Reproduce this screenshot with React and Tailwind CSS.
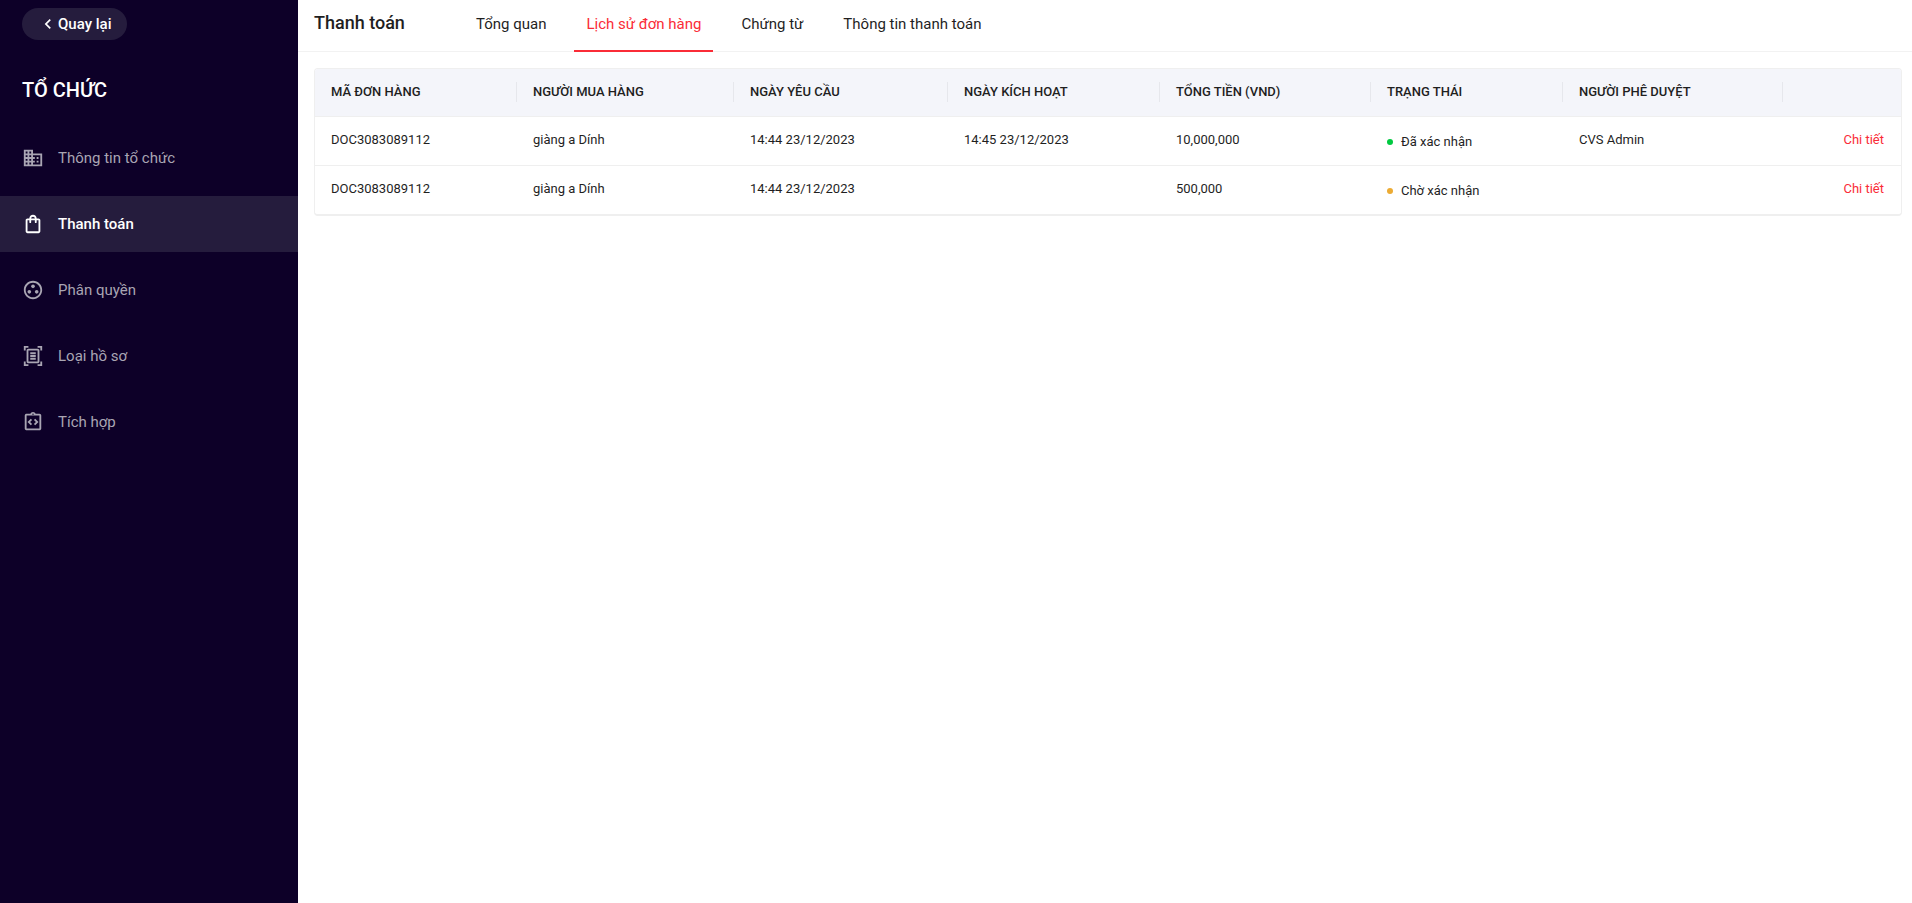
import {
  MdChevronLeft,
  MdDomain,
  MdOutlineShoppingBag,
  MdOutlineGroupWork,
  MdOutlineDocumentScanner,
  MdOutlineIntegrationInstructions,
} from "react-icons/md";
import clsx from "clsx";

const menu = [
  { label: "Thông tin tổ chức", Icon: MdDomain },
  { label: "Thanh toán", Icon: MdOutlineShoppingBag, active: true },
  { label: "Phân quyền", Icon: MdOutlineGroupWork },
  { label: "Loại hồ sơ", Icon: MdOutlineDocumentScanner },
  { label: "Tích hợp", Icon: MdOutlineIntegrationInstructions },
];

const tabs = [
  { label: "Tổng quan" },
  { label: "Lịch sử đơn hàng", active: true },
  { label: "Chứng từ" },
  { label: "Thông tin thanh toán" },
];

const columns = [
  { title: "MÃ ĐƠN HÀNG", width: "w-[202px]" },
  { title: "NGƯỜI MUA HÀNG", width: "w-[217px]" },
  { title: "NGÀY YÊU CẦU", width: "w-[214px]" },
  { title: "NGÀY KÍCH HOẠT", width: "w-[212px]" },
  { title: "TỔNG TIỀN (VND)", width: "w-[211px]" },
  { title: "TRẠNG THÁI", width: "w-[192px]" },
  { title: "NGƯỜI PHÊ DUYỆT", width: "w-[220px]" },
  { title: "", width: "w-[118px]" },
];

const orders = [
  {
    code: "DOC3083089112",
    buyer: "giàng a Dính",
    requested: "14:44 23/12/2023",
    activated: "14:45 23/12/2023",
    total: "10,000,000",
    status: "Đã xác nhận",
    dot: "bg-[#00c940]",
    approver: "CVS Admin",
  },
  {
    code: "DOC3083089112",
    buyer: "giàng a Dính",
    requested: "14:44 23/12/2023",
    activated: "",
    total: "500,000",
    status: "Chờ xác nhận",
    dot: "bg-[#ecab33]",
    approver: "",
  },
];

function Sidebar() {
  return (
    <aside className="w-[298px] shrink-0 bg-[#0d0028] text-white">
      <div className="px-[22px] pt-2">
        <button
          type="button"
          className="flex h-8 items-center rounded-full bg-[#251c3d] px-4 text-[15px] font-medium"
        >
          <MdChevronLeft size={20} />
          Quay lại
        </button>
        <h1 className="mt-9 text-xl leading-7 font-medium">TỔ CHỨC</h1>
      </div>
      <nav className="mt-[26px] flex flex-col gap-[10px]">
        {menu.map(({ label, Icon, active }) => (
          <a
            key={label}
            href="#"
            className={clsx(
              "flex h-14 items-center gap-[14px] px-[22px] text-[15px]",
              active ? "bg-[#251c3d] font-medium text-white" : "text-[#a9a5b3]"
            )}
          >
            <Icon size={22} />
            {label}
          </a>
        ))}
      </nav>
    </aside>
  );
}

function Header() {
  return (
    <header className="flex h-[52px] border-b border-[#f2f2f2] pl-4">
      <h2 className="w-[150px] pt-[11px] text-lg leading-6 font-medium">
        Thanh toán
      </h2>
      <nav className="flex gap-4">
        {tabs.map(({ label, active }) => (
          <a
            key={label}
            href="#"
            className={clsx(
              "h-[52px] border-b-[2px] px-3 pt-3 text-[15px] leading-6 whitespace-nowrap",
              active ? "border-[#fa2c37] text-[#fa2c37]" : "border-transparent"
            )}
          >
            {label}
          </a>
        ))}
      </nav>
    </header>
  );
}

function OrdersTable() {
  return (
    <div className="mt-4 mr-[10px] ml-4 overflow-hidden rounded border border-b-2 border-[#efefef]">
      <table className="w-full table-fixed border-collapse text-left text-[13px] leading-5">
        <thead className="bg-[#f4f5fa]">
          <tr className="h-[47px] border-b border-[#efefef]">
            {columns.map(({ title, width }, i) => (
              <th key={i} className={clsx(width, "p-0 font-medium")}>
                <div
                  className={clsx(
                    "h-5 pl-4",
                    i < columns.length - 1 && "border-r border-[#e6e7ec]"
                  )}
                >
                  {title}
                </div>
              </th>
            ))}
          </tr>
        </thead>
        <tbody>
          {orders.map((o, i) => (
            <tr
              key={i}
              className="h-[49px] border-b border-[#efefef] align-top last:border-b-0"
            >
              <td className="pt-[13px] pl-4">{o.code}</td>
              <td className="pt-[13px] pl-4">{o.buyer}</td>
              <td className="pt-[13px] pl-4">{o.requested}</td>
              <td className="pt-[13px] pl-4">{o.activated}</td>
              <td className="pt-[13px] pl-4">{o.total}</td>
              <td className="pt-[15px] pl-4">
                <span className="flex items-center gap-2">
                  <span className={clsx("size-[6px] rounded-full", o.dot)} />
                  {o.status}
                </span>
              </td>
              <td className="pt-[13px] pl-4">{o.approver}</td>
              <td className="pt-[13px] pr-[17px] text-right">
                <a href="#" className="text-[#fa2c37]">
                  Chi tiết
                </a>
              </td>
            </tr>
          ))}
        </tbody>
      </table>
    </div>
  );
}

export default function App() {
  return (
    <div className="flex min-h-screen bg-white font-[Roboto,'Noto_Sans',sans-serif] text-[#1f1f1f]">
      <Sidebar />
      <main className="min-w-0 flex-1">
        <Header />
        <OrdersTable />
      </main>
    </div>
  );
}
